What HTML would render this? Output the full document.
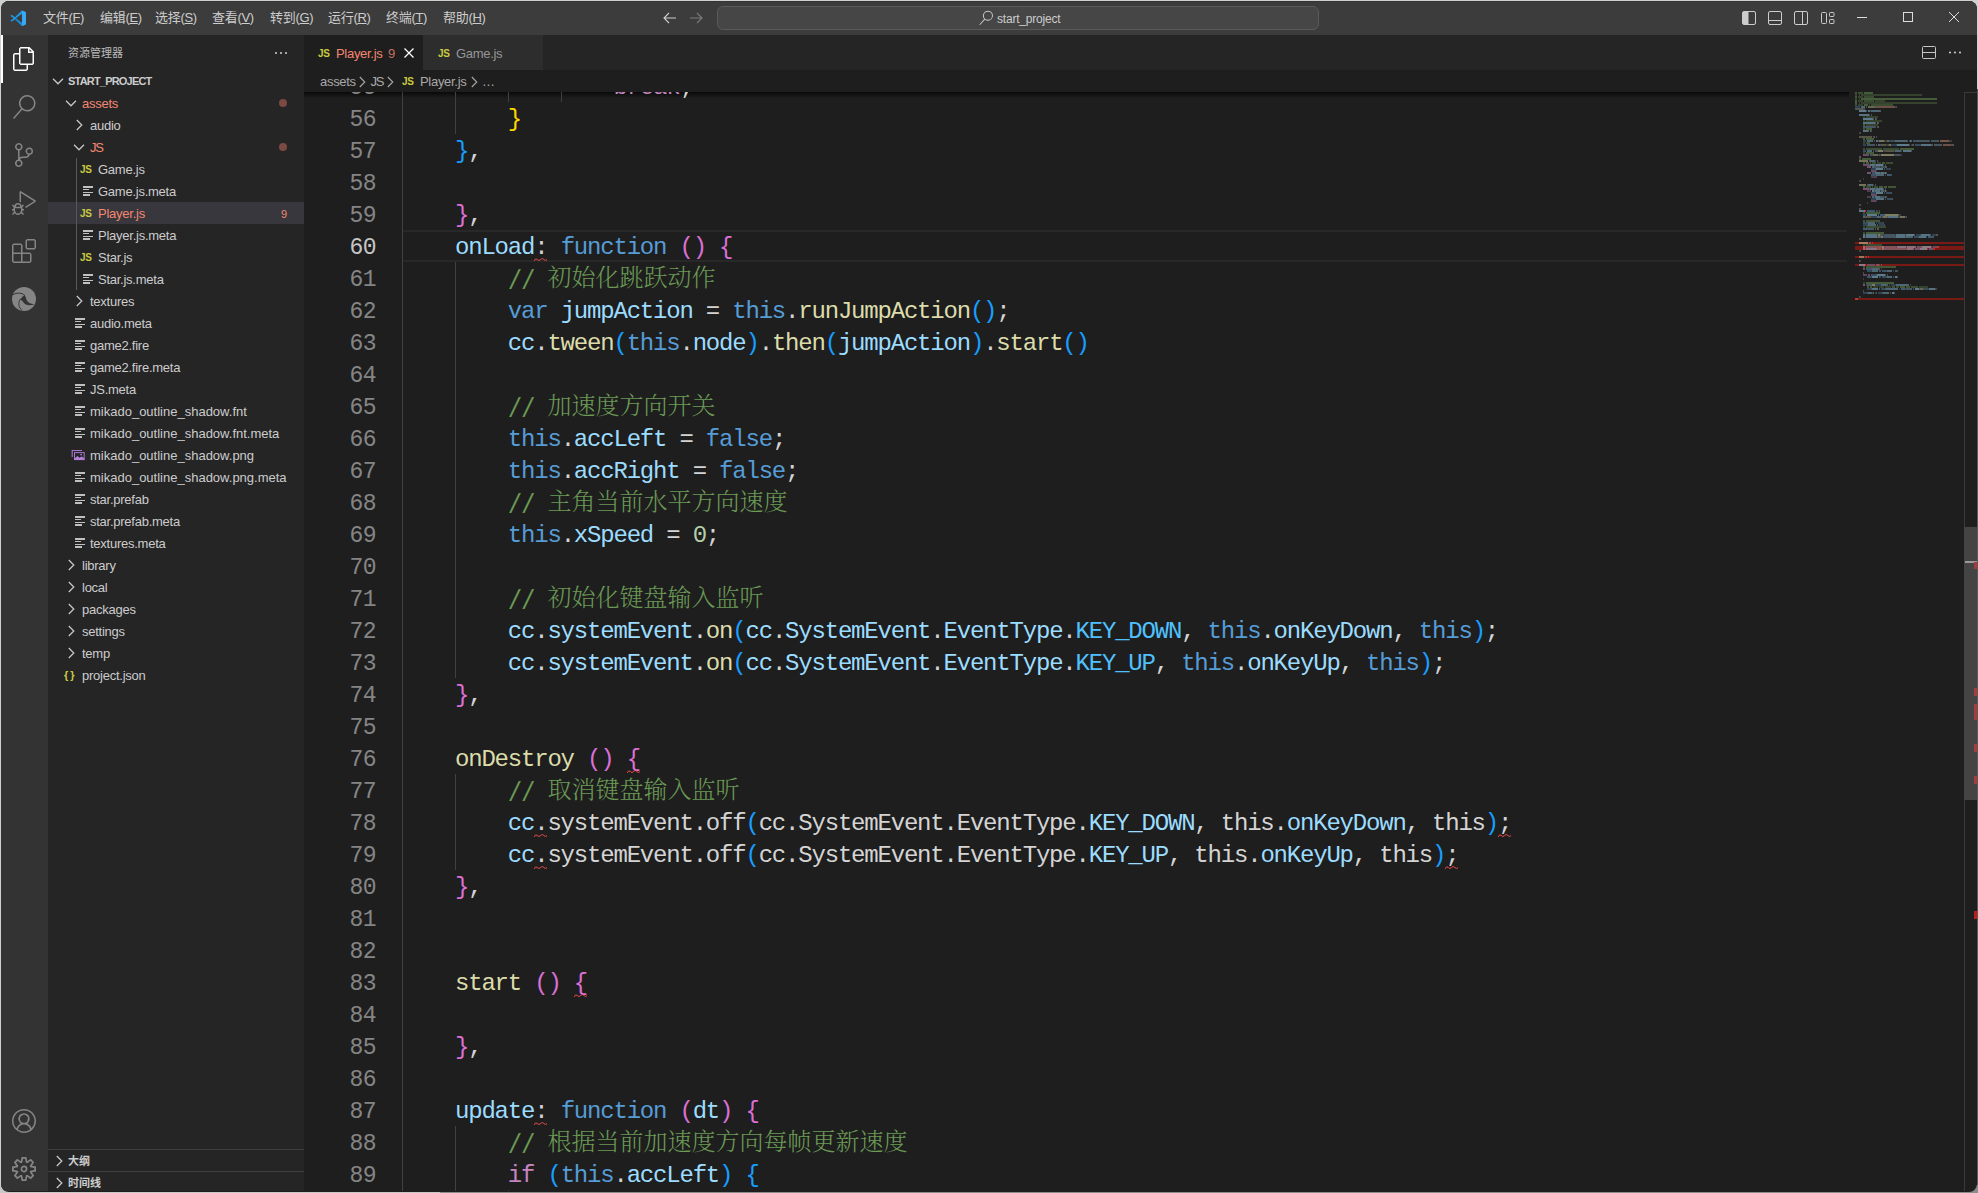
<!DOCTYPE html>
<html lang="zh-CN">
<head>
<meta charset="utf-8">
<title>Player.js - start_project - Visual Studio Code</title>
<style>
*{box-sizing:border-box;margin:0;padding:0}
html,body{width:1978px;height:1193px;overflow:hidden;background:#d0d0d0}
body{position:relative;font-family:"Liberation Sans","Noto Sans CJK SC",sans-serif;font-size:13px;color:#ccc}
.win{position:absolute;left:1px;top:1px;width:1976px;height:1190.700px;border-radius:8px;overflow:hidden;background:#1e1e1e}
.abs{position:absolute}
/* title bar */
.title{position:absolute;left:0;top:0;width:1976px;height:34px;background:#3c3c3c}
.menu{position:absolute;top:0;height:34px;line-height:34px;font-size:13px;color:#ccc;white-space:nowrap;letter-spacing:-.3px}
.cmd{position:absolute;left:716px;top:5px;width:602px;height:24px;border:1px solid #5a5a5a;border-radius:6px;background:#464646}
.cmd span{position:absolute;left:279px;top:1px;line-height:22px;letter-spacing:-.2px;font-size:12px;color:#ccc}
/* activity bar */
.act{position:absolute;left:0;top:34px;width:47px;height:1156px;background:#333}
.act svg{position:absolute;fill:#858585}
.act .ind{position:absolute;left:0;top:0;width:2px;height:48px;background:#fff}
/* sidebar */
.side{position:absolute;left:47px;top:34px;width:256px;height:1156px;background:#252526}
.side .hdr{position:absolute;left:20px;top:0;height:35px;line-height:36px;font-size:11px;color:#bbb}
.row{position:absolute;left:0;width:256px;height:22px;line-height:22px;font-size:13px;color:#ccc;white-space:nowrap}
.row .t{position:absolute;top:1px;letter-spacing:-.25px}
.row.sel{background:#37373d}
.red{color:#f48771}
.chev{position:absolute;top:3px;width:16px;height:16px;fill:none;stroke:#c8c8c8;stroke-width:1.250}
.fi{position:absolute;top:1px;font-weight:bold;font-size:10px;color:#cbcb41;letter-spacing:-.3px}
.lines{position:absolute;top:6px;width:11px;height:10px}
.lines i{position:absolute;left:0;height:1.500px;background:#c0c0c0}
.sect{position:absolute;left:0;width:256px;height:22px;border-top:1px solid #3f3f40;font-size:11px;font-weight:bold;color:#ccc;line-height:21px}
/* editor */
.tabs{position:absolute;left:303px;top:34px;width:1673px;height:35px;background:#252526}
.tab{position:absolute;top:0;height:35px;line-height:37px;font-size:13px;white-space:nowrap;letter-spacing:-.3px}
.bc{position:absolute;left:303px;top:69px;width:1673px;height:22px;background:#1e1e1e;line-height:24px;font-size:13px;color:#a9a9a9;white-space:nowrap;z-index:5;letter-spacing:-.3px}
.bcsh{position:absolute;left:0;top:22px;width:1545px;height:6px;background:linear-gradient(#000b,#0000)}
.code{position:absolute;left:303px;top:69px;width:1673px;height:1121px;overflow:hidden;font-family:"Liberation Mono","Noto Serif CJK SC",monospace;font-size:24px;letter-spacing:-1.200px}
.ln{position:absolute;left:0;width:72px;text-align:right;height:32px;line-height:32px;color:#858585;white-space:pre;font-size:23px;letter-spacing:-.6px}
.ln.cur{color:#c6c6c6}
.cl{position:absolute;left:98.2px;height:32px;line-height:32px;white-space:pre;color:#d4d4d4}
.cj{font-family:"Noto Serif CJK SC",serif;font-weight:300;font-size:24px;letter-spacing:0;line-height:32px;position:relative;top:-4px}
.sl{display:inline-block;transform:translateY(-1.600px) scaleY(1.180);transform-origin:50% 50%}
.g{position:absolute;width:1px;background:#404040}
.k{color:#569cd6}.v{color:#9cdcfe}.f{color:#dcdcaa}.c{color:#6a9955}.p{color:#c586c0}.n{color:#b5cea8}.K{color:#4fc1ff}
.b1{color:#ffd700}.b2{color:#da70d6}.b3{color:#179fff}
.sq{background:no-repeat left bottom;}
</style>
</head>
<body>
<div class="abs" style="left:1970px;top:89px;width:8px;height:1104px;background:#5a5a5a"></div>
<div class="abs" style="left:0;top:1185px;width:440px;height:8px;background:#c8c8c8"></div>
<div class="abs" style="left:440px;top:1185px;width:1538px;height:8px;background:#8c8c8c"></div>
<div class="win">
<!-- TITLE BAR -->
<div class="title">
  <div class="abs topborder" style="left:0;top:0;width:1976px;height:1px;background:#333"></div>
  <svg class="abs" style="left:8.500px;top:8.800px" width="16.500" height="16.500" viewBox="0 0 100 100">
    <path d="M71 3 29 44 11 30 3 34v32l8 4 18-14 42 41 26-11V14z" fill="#2489ca" opacity="0"/>
    <path d="M3.5 66.5 10.8 70 30 55 71 96.500V75L3.5 33.5z" fill="#1f8ad2" opacity="0"/>
    <path d="M96.5 14v72L71 97.500V2.500z" fill="#35a9f5"/>
    <path d="M71 2.500 29.500 44 11 30 3 34.500 71 75z" fill="#1f8fd8" opacity="0"/>
    <path d="M3 34.500 11 30l63 49-3 18.500L30 56 11 70l-8-4.500 20-15.500z" fill="#1a8ad4"/>
    <path d="M3 65.500 11 70l63-49-3-18.500L30 44 11 30l-8 4.500 20 15.500z" fill="#2196e0"/>
    <path d="M74 25v50L44 50z" fill="#3c3c3c"/>
    <path d="M96.500 14 74 2.500V97.500L96.500 86z" fill="#3aa8f4"/>
  </svg>
  <span class="menu" style="left:42px">文件(<u>F</u>)</span>
  <span class="menu" style="left:99px">编辑(<u>E</u>)</span>
  <span class="menu" style="left:154px">选择(<u>S</u>)</span>
  <span class="menu" style="left:211px">查看(<u>V</u>)</span>
  <span class="menu" style="left:269px">转到(<u>G</u>)</span>
  <span class="menu" style="left:327px">运行(<u>R</u>)</span>
  <span class="menu" style="left:385px">终端(<u>T</u>)</span>
  <span class="menu" style="left:442px">帮助(<u>H</u>)</span>
  <!-- nav arrows -->
  <svg class="abs" style="left:661px;top:9px" width="16" height="16" viewBox="0 0 16 16" fill="none" stroke="#ccc" stroke-width="1.1"><path d="M14 8H2.500M7 3 2 8l5 5"/></svg>
  <svg class="abs" style="left:687px;top:9px" width="16" height="16" viewBox="0 0 16 16" fill="none" stroke="#7a7a7a" stroke-width="1.1"><path d="M2 8h11.500M9 3l5 5-5 5"/></svg>
  <div class="cmd">
    <svg class="abs" style="left:260px;top:3px" width="16" height="16" viewBox="0 0 24 24" fill="#ccc"><path d="M15.250 0a8.250 8.250 0 0 0-6.180 13.720L1 22.880l1.120 1 8.050-9.120A8.251 8.251 0 1 0 15.250.010V0zm0 15a6.750 6.750 0 1 1 0-13.500 6.750 6.750 0 0 1 0 13.500z" transform="scale(.9) translate(1.300 1.300)"/></svg>
    <span>start_project</span>
  </div>
  <!-- layout controls -->
  <svg class="abs" style="left:1740px;top:9px" width="16" height="16" viewBox="0 0 16 16" fill="none" stroke="#ccc" stroke-width="1"><rect x="1.500" y="1.500" width="13" height="13" rx="1.500"/><path d="M2 2h5.500v12H2z" fill="#ccc" stroke="none"/></svg>
  <svg class="abs" style="left:1766px;top:9px" width="16" height="16" viewBox="0 0 16 16" fill="none" stroke="#ccc" stroke-width="1"><rect x="1.500" y="1.500" width="13" height="13" rx="1.500"/><path d="M1.500 10.500h13"/></svg>
  <svg class="abs" style="left:1792px;top:9px" width="16" height="16" viewBox="0 0 16 16" fill="none" stroke="#ccc" stroke-width="1"><rect x="1.500" y="1.500" width="13" height="13" rx="1.500"/><path d="M9.500 1.500v13"/></svg>
  <svg class="abs" style="left:1818px;top:9px" width="16" height="16" viewBox="0 0 16 16" fill="none" stroke="#ccc" stroke-width="1"><rect x="2.500" y="2.500" width="5" height="11" rx="1"/><rect x="10.500" y="2.500" width="4.500" height="4" rx=".8"/><rect x="10.500" y="9.500" width="4.500" height="4" rx=".8"/></svg>
  <!-- window controls -->
  <svg class="abs" style="left:1856px;top:12px" width="10" height="10" viewBox="0 0 10 10" stroke="#ddd" stroke-width="1"><path d="M0 4.500h10"/></svg>
  <svg class="abs" style="left:1902px;top:11px" width="10" height="10" viewBox="0 0 10 10" fill="none" stroke="#ddd" stroke-width="1"><rect x=".5" y=".5" width="9" height="9"/></svg>
  <svg class="abs" style="left:1948px;top:11px" width="10" height="10" viewBox="0 0 10 10" stroke="#ddd" stroke-width="1"><path d="M0 0l10 10M10 0 0 10"/></svg>
</div>
<!-- ACTIVITY BAR -->
<div class="act">
  <div class="ind"></div>
  <svg style="left:11px;top:12px;fill:#fff" width="24" height="24" viewBox="0 0 24 24"><path d="M17.500 0h-9L7 1.500V6H2.500L1 7.500v15.070L2.500 24h12.070L16 22.570V18h4.700l1.300-1.430V4.500L17.500 0zm0 2.120 2.380 2.380H17.500V2.120zm-3 20.380h-12v-15H7v9.070L8.500 18h6v4.500zm6-6h-12v-15H16V6h4.500v10.500z"/></svg>
  <svg style="left:11px;top:60px" width="24" height="24" viewBox="0 0 24 24"><path d="M15.250 0a8.250 8.250 0 0 0-6.180 13.720L1 22.880l1.120 1 8.050-9.120A8.251 8.251 0 1 0 15.250.010V0zm0 15a6.750 6.750 0 1 1 0-13.500 6.750 6.750 0 0 1 0 13.500z"/></svg>
  <svg style="left:11px;top:108px" width="24" height="24" viewBox="0 0 24 24"><path d="M21.007 8.222A3.738 3.738 0 0 0 15.045 5.200a3.737 3.737 0 0 0 1.156 6.583 2.988 2.988 0 0 1-2.668 1.670h-2.990a4.456 4.456 0 0 0-2.989 1.165V7.400a3.737 3.737 0 1 0-1.494 0v9.117a3.776 3.776 0 1 0 1.816.099 2.990 2.990 0 0 1 2.668-1.667h2.990a4.484 4.484 0 0 0 4.223-3.039 3.736 3.736 0 0 0 3.250-3.687zM4.565 3.738a2.242 2.242 0 1 1 4.484 0 2.242 2.242 0 0 1-4.484 0zm4.484 16.441a2.242 2.242 0 1 1-4.484 0 2.242 2.242 0 0 1 4.484 0zm8.221-9.715a2.242 2.242 0 1 1 0-4.485 2.242 2.242 0 0 1 0 4.485z"/></svg>
  <svg style="left:11px;top:156px" width="24" height="24" viewBox="0 0 24 24"><path d="M10.940 13.500l-1.320 1.320a3.730 3.730 0 0 0-7.240 0L1.060 13.500 0 14.560l1.720 1.720-.22.220V18H0v1.500h1.500v.080c.077.489.214.966.410 1.420L0 22.940 1.060 24l1.650-1.650A4.308 4.308 0 0 0 6 24a4.310 4.310 0 0 0 3.290-1.650L10.940 24 12 22.940 10.090 21c.198-.464.336-.951.410-1.450v-.100H12V18h-1.500v-1.500l-.22-.220L12 14.560l-1.060-1.060zM6 13.500a2.250 2.250 0 0 1 2.250 2.250h-4.500A2.250 2.250 0 0 1 6 13.500zm3 6a3.330 3.330 0 0 1-3 3 3.330 3.330 0 0 1-3-3v-2.250h6v2.250zm14.760-9.900v1.260L13.500 17.370V15.600l8.500-5.370L9 2v9.460a5.070 5.070 0 0 0-1.500-.720V.630L8.640 0l15.120 9.600z"/></svg>
  <svg style="left:11px;top:204px" width="24" height="24" viewBox="0 0 24 24"><path d="M13.500 1.500 15 0h7.500L24 1.500V9l-1.500 1.500H15L13.500 9V1.500zm1.500 0V9h7.500V1.500H15zM0 15V6l1.500-1.500H9L10.500 6v7.500H18l1.500 1.500v7.500L18 24H1.500L0 22.500V15zm9-1.500V6H1.500v7.500H9zM9 15H1.500v7.500H9V15zm1.500 7.500H18V15h-7.500v7.500z"/></svg>
  <!-- edge -->
  <svg style="left:11px;top:252px" width="24" height="24" viewBox="0 0 24 24"><circle cx="12" cy="12" r="12"/><g fill="none" stroke="#333" stroke-linecap="round"><path d="M1.200 7.400C5 5.600 10 5.400 12.800 8.400" stroke-width="1"/><path d="M8.200 12.300C5.800 16 6.500 20.500 9.800 23.300" stroke-width=".9"/></g><path d="M12.500 8.200C10.500 9.500 8.800 11 7.900 13.200 9.300 12.300 10.200 13.400 11.500 15.600 13 18 17 19.200 22.400 17.500 18.500 17 15.500 15.600 14.400 12.600 13.900 11 13.700 9.500 12.500 8.200z" fill="#333"/></svg>
  <svg style="left:11px;top:1074px" width="24" height="24" viewBox="0 0 16 16"><path d="M16 7.992C16 3.580 12.416 0 8 0S0 3.580 0 7.992c0 2.430 1.104 4.620 2.832 6.090.16.016.32.016.32.032.144.112.288.224.448.336.80.048.144.111.224.175A7.980 7.980 0 0 0 8.016 16a7.980 7.980 0 0 0 4.480-1.375c.080-.48.144-.111.224-.160.144-.111.304-.223.448-.335.016-.16.032-.16.032-.032 1.696-1.487 2.800-3.676 2.800-6.106zm-8 7.001c-1.504 0-2.880-.480-4.016-1.279.016-.128.048-.255.080-.383a4.170 4.170 0 0 1 .416-.991c.176-.304.384-.576.640-.816.240-.240.528-.463.816-.639.304-.176.624-.304.976-.400A4.150 4.150 0 0 1 8 10.342a4.185 4.185 0 0 1 2.928 1.166c.368.368.656.800.864 1.295.112.288.192.592.240.911A7.030 7.030 0 0 1 8 14.993zm-2.448-7.400a2.490 2.490 0 0 1-.208-1.024c0-.351.064-.703.208-1.023.144-.320.336-.607.576-.847.240-.240.528-.431.848-.575.320-.144.672-.208 1.024-.208.368 0 .704.064 1.024.208.320.144.608.336.848.575.240.240.432.528.576.847.144.320.208.672.208 1.023 0 .368-.64.704-.208 1.023a2.840 2.840 0 0 1-.576.848 2.840 2.840 0 0 1-.848.575 2.715 2.715 0 0 1-2.064 0 2.840 2.840 0 0 1-.848-.575 2.526 2.526 0 0 1-.560-.848zm7.424 5.306c0-.032-.016-.048-.016-.080a5.220 5.220 0 0 0-.688-1.406 4.883 4.883 0 0 0-1.088-1.135 5.207 5.207 0 0 0-1.040-.608 2.820 2.820 0 0 0 .464-.383 4.200 4.200 0 0 0 .624-.784 3.624 3.624 0 0 0 .528-1.934 3.710 3.710 0 0 0-.288-1.470 3.799 3.799 0 0 0-.816-1.199 3.845 3.845 0 0 0-1.200-.800 3.720 3.720 0 0 0-1.472-.287 3.720 3.720 0 0 0-1.472.288 3.631 3.631 0 0 0-1.200.815 3.840 3.840 0 0 0-.800 1.199 3.710 3.710 0 0 0-.288 1.470c0 .352.048.688.144 1.007.96.336.224.640.400.927.160.288.384.544.624.784.144.144.304.271.480.383a5.120 5.120 0 0 0-1.040.624c-.416.320-.784.703-1.088 1.119a4.999 4.999 0 0 0-.688 1.406c-.16.032-.16.064-.16.080C1.776 11.636.992 9.910.992 7.992.992 4.140 4.144.991 8 .991s7.008 3.149 7.008 7.001a6.960 6.960 0 0 1-2.032 4.907z"/></svg>
  <svg style="left:11px;top:1122px" width="24" height="24" viewBox="0 0 24 24"><path d="M19.850 8.750l4.150.830v4.840l-4.150.830 2.350 3.520-3.430 3.430-3.520-2.350-.830 4.150H9.580l-.830-4.150-3.520 2.350-3.430-3.430 2.350-3.520L0 14.420V9.580l4.150-.830L1.800 5.230 5.230 1.800l3.520 2.350L9.580 0h4.840l.830 4.150 3.520-2.350 3.430 3.430-2.350 3.520zm-1.570 5.070 4-.810v-2l-4-.810-.540-1.300 2.290-3.430-1.430-1.430-3.430 2.290-1.300-.540-.810-4h-2l-.810 4-1.300.540-3.430-2.290-1.430 1.430L6.380 8.900l-.540 1.300-4 .810v2l4 .810.540 1.300-2.290 3.430 1.430 1.430 3.430-2.290 1.300.540.810 4h2l.810-4 1.300-.540 3.430 2.290 1.430-1.430-2.290-3.430.540-1.300zm-8.186-4.672A3.430 3.430 0 0 1 12 8.570 3.440 3.440 0 0 1 15.430 12a3.430 3.430 0 1 1-5.336-2.852zm.956 4.274c.281.188.612.288.950.288A1.700 1.700 0 0 0 13.710 12a1.710 1.710 0 1 0-2.660 1.422z"/></svg>
</div>
<!-- SIDEBAR -->
<div class="side">
<div class="hdr">资源管理器</div>
<svg class="abs" style="left:225px;top:10px" width="16" height="16" viewBox="0 0 16 16" fill="#c5c5c5"><circle cx="3" cy="8" r="1.1"/><circle cx="8" cy="8" r="1.1"/><circle cx="13" cy="8" r="1.1"/></svg>
<div class="row" style="top:35px;font-size:11px;font-weight:bold"><svg class="chev" style="left:2px" viewBox="0 0 16 16"><path d="M3 5.800 8 10.800 13 5.800"/></svg><span class="t" style="left:20px;top:0;letter-spacing:-.8px">START_PROJECT</span></div>
<div class="row" style="top:57px"><svg class="chev" style="left:15px" viewBox="0 0 16 16"><path d="M3 5.800 8 10.800 13 5.800"/></svg><span class="t red" style="left:34px">assets</span><span class="abs" style="left:231px;top:7px;width:8px;height:8px;border-radius:50%;background:#7c4a43"></span></div>
<div class="row" style="top:79px"><svg class="chev" style="left:23px" viewBox="0 0 16 16"><path d="M5.800 3 10.800 8 5.800 13"/></svg><span class="t" style="left:42px">audio</span></div>
<div class="row" style="top:101px"><svg class="chev" style="left:23px" viewBox="0 0 16 16"><path d="M3 5.800 8 10.800 13 5.800"/></svg><span class="t red" style="left:42px;letter-spacing:-1.300px">JS</span><span class="abs" style="left:231px;top:7px;width:8px;height:8px;border-radius:50%;background:#7c4a43"></span></div>
<div class="row" style="top:123px"><span class="fi" style="left:32px">JS</span><span class="t" style="left:50px">Game.js</span></div>
<div class="row" style="top:145px"><span class="lines" style="left:35px"><i style="top:0;width:9.500px"></i><i style="top:2.800px;width:6px"></i><i style="top:5.600px;width:9.500px"></i><i style="top:8.400px;width:6.500px"></i></span><span class="t" style="left:50px">Game.js.meta</span></div>
<div class="row sel" style="top:167px"><span class="fi" style="left:32px">JS</span><span class="t red" style="left:50px">Player.js</span><span class="abs" style="left:233px;top:1px;font-size:11px;color:#f48771">9</span></div>
<div class="row" style="top:189px"><span class="lines" style="left:35px"><i style="top:0;width:9.500px"></i><i style="top:2.800px;width:6px"></i><i style="top:5.600px;width:9.500px"></i><i style="top:8.400px;width:6.500px"></i></span><span class="t" style="left:50px">Player.js.meta</span></div>
<div class="row" style="top:211px"><span class="fi" style="left:32px">JS</span><span class="t" style="left:50px">Star.js</span></div>
<div class="row" style="top:233px"><span class="lines" style="left:35px"><i style="top:0;width:9.500px"></i><i style="top:2.800px;width:6px"></i><i style="top:5.600px;width:9.500px"></i><i style="top:8.400px;width:6.500px"></i></span><span class="t" style="left:50px">Star.js.meta</span></div>
<div class="row" style="top:255px"><svg class="chev" style="left:23px" viewBox="0 0 16 16"><path d="M5.800 3 10.800 8 5.800 13"/></svg><span class="t" style="left:42px">textures</span></div>
<div class="row" style="top:277px"><span class="lines" style="left:27px"><i style="top:0;width:9.500px"></i><i style="top:2.800px;width:6px"></i><i style="top:5.600px;width:9.500px"></i><i style="top:8.400px;width:6.500px"></i></span><span class="t" style="left:42px">audio.meta</span></div>
<div class="row" style="top:299px"><span class="lines" style="left:27px"><i style="top:0;width:9.500px"></i><i style="top:2.800px;width:6px"></i><i style="top:5.600px;width:9.500px"></i><i style="top:8.400px;width:6.500px"></i></span><span class="t" style="left:42px">game2.fire</span></div>
<div class="row" style="top:321px"><span class="lines" style="left:27px"><i style="top:0;width:9.500px"></i><i style="top:2.800px;width:6px"></i><i style="top:5.600px;width:9.500px"></i><i style="top:8.400px;width:6.500px"></i></span><span class="t" style="left:42px">game2.fire.meta</span></div>
<div class="row" style="top:343px"><span class="lines" style="left:27px"><i style="top:0;width:9.500px"></i><i style="top:2.800px;width:6px"></i><i style="top:5.600px;width:9.500px"></i><i style="top:8.400px;width:6.500px"></i></span><span class="t" style="left:42px">JS.meta</span></div>
<div class="row" style="top:365px"><span class="lines" style="left:27px"><i style="top:0;width:9.500px"></i><i style="top:2.800px;width:6px"></i><i style="top:5.600px;width:9.500px"></i><i style="top:8.400px;width:6.500px"></i></span><span class="t" style="left:42px;letter-spacing:0">mikado_outline_shadow.fnt</span></div>
<div class="row" style="top:387px"><span class="lines" style="left:27px"><i style="top:0;width:9.500px"></i><i style="top:2.800px;width:6px"></i><i style="top:5.600px;width:9.500px"></i><i style="top:8.400px;width:6.500px"></i></span><span class="t" style="left:42px;letter-spacing:0">mikado_outline_shadow.fnt.meta</span></div>
<div class="row" style="top:409px"><svg class="abs" style="left:23px;top:5px" width="15" height="13" viewBox="0 0 15 13"><path d="M1.200 8V1.500H11" fill="none" stroke="#a877cf" stroke-width="1.100"/><rect x="3.500" y="3.600" width="9.700" height="7" fill="#252526" stroke="#a877cf" stroke-width="1"/><path d="M3.500 10.800V9.500L6.400 6.900 8.400 8.800 10.500 7.400 13.200 9.300v1.500z" fill="#b582dc"/><circle cx="10.100" cy="5.600" r=".9" fill="#b582dc"/></svg><span class="t" style="left:42px;letter-spacing:0">mikado_outline_shadow.png</span></div>
<div class="row" style="top:431px"><span class="lines" style="left:27px"><i style="top:0;width:9.500px"></i><i style="top:2.800px;width:6px"></i><i style="top:5.600px;width:9.500px"></i><i style="top:8.400px;width:6.500px"></i></span><span class="t" style="left:42px;letter-spacing:0">mikado_outline_shadow.png.meta</span></div>
<div class="row" style="top:453px"><span class="lines" style="left:27px"><i style="top:0;width:9.500px"></i><i style="top:2.800px;width:6px"></i><i style="top:5.600px;width:9.500px"></i><i style="top:8.400px;width:6.500px"></i></span><span class="t" style="left:42px">star.prefab</span></div>
<div class="row" style="top:475px"><span class="lines" style="left:27px"><i style="top:0;width:9.500px"></i><i style="top:2.800px;width:6px"></i><i style="top:5.600px;width:9.500px"></i><i style="top:8.400px;width:6.500px"></i></span><span class="t" style="left:42px">star.prefab.meta</span></div>
<div class="row" style="top:497px"><span class="lines" style="left:27px"><i style="top:0;width:9.500px"></i><i style="top:2.800px;width:6px"></i><i style="top:5.600px;width:9.500px"></i><i style="top:8.400px;width:6.500px"></i></span><span class="t" style="left:42px">textures.meta</span></div>
<div class="row" style="top:519px"><svg class="chev" style="left:15px" viewBox="0 0 16 16"><path d="M5.800 3 10.800 8 5.800 13"/></svg><span class="t" style="left:34px">library</span></div>
<div class="row" style="top:541px"><svg class="chev" style="left:15px" viewBox="0 0 16 16"><path d="M5.800 3 10.800 8 5.800 13"/></svg><span class="t" style="left:34px">local</span></div>
<div class="row" style="top:563px"><svg class="chev" style="left:15px" viewBox="0 0 16 16"><path d="M5.800 3 10.800 8 5.800 13"/></svg><span class="t" style="left:34px">packages</span></div>
<div class="row" style="top:585px"><svg class="chev" style="left:15px" viewBox="0 0 16 16"><path d="M5.800 3 10.800 8 5.800 13"/></svg><span class="t" style="left:34px">settings</span></div>
<div class="row" style="top:607px"><svg class="chev" style="left:15px" viewBox="0 0 16 16"><path d="M5.800 3 10.800 8 5.800 13"/></svg><span class="t" style="left:34px">temp</span></div>
<div class="row" style="top:629px"><span class="abs" style="left:16px;top:0;font-weight:bold;font-size:11px;color:#cbcb41;letter-spacing:2px">{}</span><span class="t" style="left:34px">project.json</span></div>
<div class="abs" style="left:28px;top:123px;width:1px;height:132px;background:#585858"></div>
<div class="sect" style="top:1114px"><svg class="chev" style="left:3px" viewBox="0 0 16 16"><path d="M5.800 3 10.800 8 5.800 13"/></svg><span class="abs" style="left:20px;top:1px">大纲</span></div>
<div class="sect" style="top:1136px"><svg class="chev" style="left:3px" viewBox="0 0 16 16"><path d="M5.800 3 10.800 8 5.800 13"/></svg><span class="abs" style="left:20px;top:1px">时间线</span></div>
</div>
<!-- EDITOR -->
<div class="code">
<div class="bcsh"></div>
<div class="abs" style="left:99px;top:160px;width:1444px;height:32px;border-top:2px solid #282828;border-bottom:2px solid #282828"></div>
<div class="g" style="left:98px;top:0px;height:1152px"></div>
<div class="g" style="left:151px;top:0px;height:64px"></div>
<div class="g" style="left:151px;top:192px;height:416px"></div>
<div class="g" style="left:151px;top:704px;height:96px"></div>
<div class="g" style="left:151px;top:1056px;height:96px"></div>
<div class="g" style="left:204px;top:0px;height:32px"></div>
<div class="g" style="left:257px;top:0px;height:32px"></div>
<div class="g" style="left:204px;top:1120px;height:32px"></div>
<div class="ln" style="top:2px">55</div>
<div class="cl" style="top:2px">                <span class="p">break</span>;</div>
<div class="ln" style="top:34px">56</div>
<div class="cl" style="top:34px">        <span class="b1">}</span></div>
<div class="ln" style="top:66px">57</div>
<div class="cl" style="top:66px">    <span class="b3">}</span>,</div>
<div class="ln" style="top:98px">58</div>
<div class="ln" style="top:130px">59</div>
<div class="cl" style="top:130px">    <span class="b2">}</span>,</div>
<div class="ln cur" style="top:162px">60</div>
<div class="cl" style="top:162px">    <span class="v">onLoad</span>: <span class="k">function</span> <span class="b2">()</span> <span class="b2">{</span></div>
<div class="ln" style="top:194px">61</div>
<div class="cl" style="top:194px">        <span class="c"><span class="sl">//</span> <span class="cj">初始化跳跃动作</span></span></div>
<div class="ln" style="top:226px">62</div>
<div class="cl" style="top:226px">        <span class="k">var</span> <span class="v">jumpAction</span> = <span class="k">this</span>.<span class="f">runJumpAction</span><span class="b3">()</span>;</div>
<div class="ln" style="top:258px">63</div>
<div class="cl" style="top:258px">        <span class="v">cc</span>.<span class="f">tween</span><span class="b3">(</span><span class="k">this</span>.<span class="v">node</span><span class="b3">)</span>.<span class="f">then</span><span class="b3">(</span><span class="v">jumpAction</span><span class="b3">)</span>.<span class="f">start</span><span class="b3">()</span></div>
<div class="ln" style="top:290px">64</div>
<div class="ln" style="top:322px">65</div>
<div class="cl" style="top:322px">        <span class="c"><span class="sl">//</span> <span class="cj">加速度方向开关</span></span></div>
<div class="ln" style="top:354px">66</div>
<div class="cl" style="top:354px">        <span class="k">this</span>.<span class="v">accLeft</span> = <span class="k">false</span>;</div>
<div class="ln" style="top:386px">67</div>
<div class="cl" style="top:386px">        <span class="k">this</span>.<span class="v">accRight</span> = <span class="k">false</span>;</div>
<div class="ln" style="top:418px">68</div>
<div class="cl" style="top:418px">        <span class="c"><span class="sl">//</span> <span class="cj">主角当前水平方向速度</span></span></div>
<div class="ln" style="top:450px">69</div>
<div class="cl" style="top:450px">        <span class="k">this</span>.<span class="v">xSpeed</span> = <span class="n">0</span>;</div>
<div class="ln" style="top:482px">70</div>
<div class="ln" style="top:514px">71</div>
<div class="cl" style="top:514px">        <span class="c"><span class="sl">//</span> <span class="cj">初始化键盘输入监听</span></span></div>
<div class="ln" style="top:546px">72</div>
<div class="cl" style="top:546px">        <span class="v">cc</span>.<span class="v">systemEvent</span>.<span class="f">on</span><span class="b3">(</span><span class="v">cc</span>.<span class="v">SystemEvent</span>.<span class="v">EventType</span>.<span class="K">KEY_DOWN</span>, <span class="k">this</span>.<span class="v">onKeyDown</span>, <span class="k">this</span><span class="b3">)</span>;</div>
<div class="ln" style="top:578px">73</div>
<div class="cl" style="top:578px">        <span class="v">cc</span>.<span class="v">systemEvent</span>.<span class="f">on</span><span class="b3">(</span><span class="v">cc</span>.<span class="v">SystemEvent</span>.<span class="v">EventType</span>.<span class="K">KEY_UP</span>, <span class="k">this</span>.<span class="v">onKeyUp</span>, <span class="k">this</span><span class="b3">)</span>;</div>
<div class="ln" style="top:610px">74</div>
<div class="cl" style="top:610px">    <span class="b2">}</span>,</div>
<div class="ln" style="top:642px">75</div>
<div class="ln" style="top:674px">76</div>
<div class="cl" style="top:674px">    <span class="f">onDestroy</span> <span class="b2">()</span> <span class="b2">{</span></div>
<div class="ln" style="top:706px">77</div>
<div class="cl" style="top:706px">        <span class="c"><span class="sl">//</span> <span class="cj">取消键盘输入监听</span></span></div>
<div class="ln" style="top:738px">78</div>
<div class="cl" style="top:738px">        <span class="v">cc</span>.systemEvent.off<span class="b3">(</span>cc.SystemEvent.EventType.<span class="v">KEY_DOWN</span>, this.<span class="v">onKeyDown</span>, this<span class="b3">)</span>;</div>
<div class="ln" style="top:770px">79</div>
<div class="cl" style="top:770px">        <span class="v">cc</span>.systemEvent.off<span class="b3">(</span>cc.SystemEvent.EventType.<span class="v">KEY_UP</span>, this.<span class="v">onKeyUp</span>, this<span class="b3">)</span>;</div>
<div class="ln" style="top:802px">80</div>
<div class="cl" style="top:802px">    <span class="b2">}</span>,</div>
<div class="ln" style="top:834px">81</div>
<div class="ln" style="top:866px">82</div>
<div class="ln" style="top:898px">83</div>
<div class="cl" style="top:898px">    <span class="f">start</span> <span class="b2">()</span> <span class="b2">{</span></div>
<div class="ln" style="top:930px">84</div>
<div class="ln" style="top:962px">85</div>
<div class="cl" style="top:962px">    <span class="b2">}</span>,</div>
<div class="ln" style="top:994px">86</div>
<div class="ln" style="top:1026px">87</div>
<div class="cl" style="top:1026px">    <span class="v">update</span>: <span class="k">function</span> <span class="b2">(</span><span class="v">dt</span><span class="b2">)</span> <span class="b2">{</span></div>
<div class="ln" style="top:1058px">88</div>
<div class="cl" style="top:1058px">        <span class="c"><span class="sl">//</span> <span class="cj">根据当前加速度方向每帧更新速度</span></span></div>
<div class="ln" style="top:1090px">89</div>
<div class="cl" style="top:1090px">        <span class="p">if</span> <span class="b3">(</span><span class="k">this</span>.<span class="v">accLeft</span><span class="b3">)</span> <span class="b3">{</span></div>
<div class="ln" style="top:1122px">90</div>
<div class="cl" style="top:1122px">            <span class="k">this</span>.<span class="v">xSpeed</span> -= <span class="k">this</span>.<span class="v">accel</span> * <span class="v">dt</span>;</div>
<svg class="abs" style="left:230.2px;top:188px" width="13.200" height="4" viewBox="0 0 13.200 4" fill="none" stroke="#f14c4c" stroke-width="1"><path d="M0 3q1.650-3.600 3.300-1.500t3.300 0 3.300 0 3.300 0"/></svg>
<svg class="abs" style="left:322.6px;top:700px" width="13.200" height="4" viewBox="0 0 13.200 4" fill="none" stroke="#f14c4c" stroke-width="1"><path d="M0 3q1.650-3.600 3.300-1.500t3.300 0 3.300 0 3.300 0"/></svg>
<svg class="abs" style="left:230.2px;top:764px" width="13.200" height="4" viewBox="0 0 13.200 4" fill="none" stroke="#f14c4c" stroke-width="1"><path d="M0 3q1.650-3.600 3.300-1.500t3.300 0 3.300 0 3.300 0"/></svg>
<svg class="abs" style="left:1193.8px;top:764px" width="13.200" height="4" viewBox="0 0 13.200 4" fill="none" stroke="#f14c4c" stroke-width="1"><path d="M0 3q1.650-3.600 3.300-1.500t3.300 0 3.300 0 3.300 0"/></svg>
<svg class="abs" style="left:230.2px;top:796px" width="13.200" height="4" viewBox="0 0 13.200 4" fill="none" stroke="#f14c4c" stroke-width="1"><path d="M0 3q1.650-3.600 3.300-1.500t3.300 0 3.300 0 3.300 0"/></svg>
<svg class="abs" style="left:1141.0px;top:796px" width="13.200" height="4" viewBox="0 0 13.200 4" fill="none" stroke="#f14c4c" stroke-width="1"><path d="M0 3q1.650-3.600 3.300-1.500t3.300 0 3.300 0 3.300 0"/></svg>
<svg class="abs" style="left:269.8px;top:924px" width="13.200" height="4" viewBox="0 0 13.200 4" fill="none" stroke="#f14c4c" stroke-width="1"><path d="M0 3q1.650-3.600 3.300-1.500t3.300 0 3.300 0 3.300 0"/></svg>
<svg class="abs" style="left:230.2px;top:1052px" width="13.200" height="4" viewBox="0 0 13.200 4" fill="none" stroke="#f14c4c" stroke-width="1"><path d="M0 3q1.650-3.600 3.300-1.500t3.300 0 3.300 0 3.300 0"/></svg>
<svg class="abs" style="left:1551px;top:22px" width="109" height="212" shape-rendering="crispEdges">
<rect x="0" y="150" width="109" height="2" fill="#7a1a16"/>
<rect x="0" y="154" width="109" height="2" fill="#7a1a16"/>
<rect x="0" y="156" width="109" height="2" fill="#7a1a16"/>
<rect x="0" y="164" width="109" height="2" fill="#7a1a16"/>
<rect x="0" y="172" width="109" height="2" fill="#7a1a16"/>
<rect x="0" y="206" width="109" height="2" fill="#7a1a16"/>
<rect x="0" y="0" width="2" height="2" fill="#6a9955" opacity=".45"/>
<rect x="3" y="0" width="5" height="2" fill="#6a9955" opacity=".38"/>
<rect x="9" y="0" width="9" height="2" fill="#6a9955" opacity=".5"/>
<rect x="0" y="2" width="2" height="2" fill="#6a9955" opacity=".3"/>
<rect x="4" y="2" width="1" height="2" fill="#6a9955" opacity=".3"/>
<rect x="6" y="2" width="61" height="2" fill="#6a9955" opacity=".3"/>
<rect x="0" y="4" width="2" height="2" fill="#6a9955" opacity=".45"/>
<rect x="3" y="4" width="5" height="2" fill="#6a9955" opacity=".3"/>
<rect x="9" y="4" width="10" height="2" fill="#6a9955" opacity=".38"/>
<rect x="0" y="6" width="2" height="2" fill="#6a9955" opacity=".3"/>
<rect x="4" y="6" width="1" height="2" fill="#6a9955" opacity=".3"/>
<rect x="6" y="6" width="76" height="2" fill="#6a9955" opacity=".5"/>
<rect x="0" y="8" width="2" height="2" fill="#6a9955" opacity=".5"/>
<rect x="3" y="8" width="5" height="2" fill="#6a9955" opacity=".3"/>
<rect x="9" y="8" width="10" height="2" fill="#6a9955" opacity=".38"/>
<rect x="20" y="8" width="10" height="2" fill="#6a9955" opacity=".3"/>
<rect x="0" y="10" width="2" height="2" fill="#6a9955" opacity=".5"/>
<rect x="4" y="10" width="1" height="2" fill="#6a9955" opacity=".3"/>
<rect x="6" y="10" width="76" height="2" fill="#6a9955" opacity=".3"/>
<rect x="0" y="12" width="2" height="2" fill="#6a9955" opacity=".38"/>
<rect x="3" y="12" width="5" height="2" fill="#6a9955" opacity=".3"/>
<rect x="9" y="12" width="4" height="2" fill="#6a9955" opacity=".5"/>
<rect x="14" y="12" width="1" height="2" fill="#6a9955" opacity=".3"/>
<rect x="16" y="12" width="22" height="2" fill="#6a9955" opacity=".38"/>
<rect x="0" y="14" width="5" height="2" fill="#569cd6" opacity=".3"/>
<rect x="6" y="14" width="4" height="2" fill="#9cdcfe" opacity=".38"/>
<rect x="11" y="14" width="1" height="2" fill="#d4d4d4" opacity=".25"/>
<rect x="13" y="14" width="7" height="2" fill="#dcdcaa" opacity=".38"/>
<rect x="20" y="14" width="1" height="2" fill="#d4d4d4" opacity=".3"/>
<rect x="21" y="14" width="19" height="2" fill="#ce9178" opacity=".45"/>
<rect x="40" y="14" width="1" height="2" fill="#d4d4d4" opacity=".18"/>
<rect x="41" y="14" width="1" height="2" fill="#d4d4d4" opacity=".25"/>
<rect x="0" y="16" width="2" height="2" fill="#9cdcfe" opacity=".3"/>
<rect x="2" y="16" width="1" height="2" fill="#d4d4d4" opacity=".3"/>
<rect x="3" y="16" width="5" height="2" fill="#dcdcaa" opacity=".3"/>
<rect x="8" y="16" width="1" height="2" fill="#d4d4d4" opacity=".25"/>
<rect x="9" y="16" width="1" height="2" fill="#d4d4d4" opacity=".25"/>
<rect x="4" y="18" width="7" height="2" fill="#9cdcfe" opacity=".5"/>
<rect x="11" y="18" width="1" height="2" fill="#d4d4d4" opacity=".25"/>
<rect x="13" y="18" width="2" height="2" fill="#9cdcfe" opacity=".45"/>
<rect x="15" y="18" width="1" height="2" fill="#d4d4d4" opacity=".18"/>
<rect x="16" y="18" width="9" height="2" fill="#9cdcfe" opacity=".38"/>
<rect x="25" y="18" width="1" height="2" fill="#d4d4d4" opacity=".3"/>
<rect x="4" y="22" width="10" height="2" fill="#9cdcfe" opacity=".45"/>
<rect x="14" y="22" width="1" height="2" fill="#d4d4d4" opacity=".25"/>
<rect x="16" y="22" width="1" height="2" fill="#d4d4d4" opacity=".25"/>
<rect x="8" y="24" width="2" height="2" fill="#6a9955" opacity=".3"/>
<rect x="11" y="24" width="12" height="2" fill="#6a9955" opacity=".3"/>
<rect x="8" y="26" width="10" height="2" fill="#9cdcfe" opacity=".5"/>
<rect x="18" y="26" width="1" height="2" fill="#d4d4d4" opacity=".25"/>
<rect x="20" y="26" width="1" height="2" fill="#b5cea8" opacity=".38"/>
<rect x="21" y="26" width="1" height="2" fill="#d4d4d4" opacity=".25"/>
<rect x="8" y="28" width="2" height="2" fill="#6a9955" opacity=".3"/>
<rect x="11" y="28" width="16" height="2" fill="#6a9955" opacity=".3"/>
<rect x="8" y="30" width="12" height="2" fill="#9cdcfe" opacity=".45"/>
<rect x="20" y="30" width="1" height="2" fill="#d4d4d4" opacity=".3"/>
<rect x="22" y="30" width="1" height="2" fill="#b5cea8" opacity=".45"/>
<rect x="23" y="30" width="1" height="2" fill="#d4d4d4" opacity=".3"/>
<rect x="8" y="32" width="2" height="2" fill="#6a9955" opacity=".5"/>
<rect x="11" y="32" width="12" height="2" fill="#6a9955" opacity=".3"/>
<rect x="8" y="34" width="12" height="2" fill="#9cdcfe" opacity=".3"/>
<rect x="20" y="34" width="1" height="2" fill="#d4d4d4" opacity=".25"/>
<rect x="22" y="34" width="1" height="2" fill="#b5cea8" opacity=".3"/>
<rect x="23" y="34" width="1" height="2" fill="#d4d4d4" opacity=".3"/>
<rect x="8" y="36" width="2" height="2" fill="#6a9955" opacity=".45"/>
<rect x="11" y="36" width="6" height="2" fill="#6a9955" opacity=".5"/>
<rect x="8" y="38" width="5" height="2" fill="#9cdcfe" opacity=".45"/>
<rect x="13" y="38" width="1" height="2" fill="#d4d4d4" opacity=".3"/>
<rect x="15" y="38" width="1" height="2" fill="#b5cea8" opacity=".45"/>
<rect x="16" y="38" width="1" height="2" fill="#d4d4d4" opacity=".25"/>
<rect x="4" y="40" width="1" height="2" fill="#d4d4d4" opacity=".18"/>
<rect x="5" y="40" width="1" height="2" fill="#d4d4d4" opacity=".25"/>
<rect x="4" y="44" width="13" height="2" fill="#dcdcaa" opacity=".3"/>
<rect x="18" y="44" width="1" height="2" fill="#d4d4d4" opacity=".25"/>
<rect x="19" y="44" width="1" height="2" fill="#d4d4d4" opacity=".3"/>
<rect x="21" y="44" width="1" height="2" fill="#d4d4d4" opacity=".25"/>
<rect x="8" y="46" width="2" height="2" fill="#6a9955" opacity=".5"/>
<rect x="11" y="46" width="8" height="2" fill="#6a9955" opacity=".5"/>
<rect x="8" y="48" width="3" height="2" fill="#569cd6" opacity=".3"/>
<rect x="12" y="48" width="6" height="2" fill="#9cdcfe" opacity=".38"/>
<rect x="19" y="48" width="1" height="2" fill="#d4d4d4" opacity=".25"/>
<rect x="21" y="48" width="2" height="2" fill="#9cdcfe" opacity=".45"/>
<rect x="23" y="48" width="1" height="2" fill="#d4d4d4" opacity=".25"/>
<rect x="24" y="48" width="5" height="2" fill="#dcdcaa" opacity=".45"/>
<rect x="29" y="48" width="1" height="2" fill="#d4d4d4" opacity=".25"/>
<rect x="30" y="48" width="1" height="2" fill="#d4d4d4" opacity=".18"/>
<rect x="31" y="48" width="1" height="2" fill="#d4d4d4" opacity=".18"/>
<rect x="32" y="48" width="2" height="2" fill="#dcdcaa" opacity=".38"/>
<rect x="34" y="48" width="1" height="2" fill="#d4d4d4" opacity=".18"/>
<rect x="35" y="48" width="4" height="2" fill="#569cd6" opacity=".38"/>
<rect x="39" y="48" width="1" height="2" fill="#d4d4d4" opacity=".25"/>
<rect x="40" y="48" width="12" height="2" fill="#9cdcfe" opacity=".38"/>
<rect x="52" y="48" width="1" height="2" fill="#d4d4d4" opacity=".25"/>
<rect x="54" y="48" width="1" height="2" fill="#d4d4d4" opacity=".18"/>
<rect x="55" y="48" width="1" height="2" fill="#9cdcfe" opacity=".5"/>
<rect x="56" y="48" width="1" height="2" fill="#d4d4d4" opacity=".3"/>
<rect x="58" y="48" width="4" height="2" fill="#569cd6" opacity=".45"/>
<rect x="62" y="48" width="1" height="2" fill="#d4d4d4" opacity=".3"/>
<rect x="63" y="48" width="10" height="2" fill="#9cdcfe" opacity=".3"/>
<rect x="73" y="48" width="1" height="2" fill="#d4d4d4" opacity=".3"/>
<rect x="74" y="48" width="1" height="2" fill="#d4d4d4" opacity=".25"/>
<rect x="76" y="48" width="1" height="2" fill="#d4d4d4" opacity=".25"/>
<rect x="77" y="48" width="6" height="2" fill="#9cdcfe" opacity=".3"/>
<rect x="83" y="48" width="1" height="2" fill="#d4d4d4" opacity=".3"/>
<rect x="85" y="48" width="9" height="2" fill="#ce9178" opacity=".5"/>
<rect x="94" y="48" width="1" height="2" fill="#d4d4d4" opacity=".18"/>
<rect x="95" y="48" width="1" height="2" fill="#d4d4d4" opacity=".18"/>
<rect x="96" y="48" width="1" height="2" fill="#d4d4d4" opacity=".18"/>
<rect x="8" y="50" width="2" height="2" fill="#6a9955" opacity=".3"/>
<rect x="11" y="50" width="4" height="2" fill="#6a9955" opacity=".45"/>
<rect x="8" y="52" width="3" height="2" fill="#569cd6" opacity=".3"/>
<rect x="12" y="52" width="8" height="2" fill="#9cdcfe" opacity=".3"/>
<rect x="21" y="52" width="1" height="2" fill="#d4d4d4" opacity=".3"/>
<rect x="23" y="52" width="2" height="2" fill="#9cdcfe" opacity=".38"/>
<rect x="25" y="52" width="1" height="2" fill="#d4d4d4" opacity=".25"/>
<rect x="26" y="52" width="5" height="2" fill="#dcdcaa" opacity=".3"/>
<rect x="31" y="52" width="1" height="2" fill="#d4d4d4" opacity=".18"/>
<rect x="32" y="52" width="1" height="2" fill="#d4d4d4" opacity=".18"/>
<rect x="33" y="52" width="1" height="2" fill="#d4d4d4" opacity=".25"/>
<rect x="34" y="52" width="2" height="2" fill="#dcdcaa" opacity=".45"/>
<rect x="36" y="52" width="1" height="2" fill="#d4d4d4" opacity=".18"/>
<rect x="37" y="52" width="4" height="2" fill="#569cd6" opacity=".3"/>
<rect x="41" y="52" width="1" height="2" fill="#d4d4d4" opacity=".25"/>
<rect x="42" y="52" width="12" height="2" fill="#9cdcfe" opacity=".5"/>
<rect x="54" y="52" width="1" height="2" fill="#d4d4d4" opacity=".25"/>
<rect x="56" y="52" width="1" height="2" fill="#d4d4d4" opacity=".18"/>
<rect x="57" y="52" width="1" height="2" fill="#9cdcfe" opacity=".3"/>
<rect x="58" y="52" width="1" height="2" fill="#d4d4d4" opacity=".3"/>
<rect x="60" y="52" width="1" height="2" fill="#d4d4d4" opacity=".25"/>
<rect x="61" y="52" width="4" height="2" fill="#569cd6" opacity=".38"/>
<rect x="65" y="52" width="1" height="2" fill="#d4d4d4" opacity=".18"/>
<rect x="66" y="52" width="10" height="2" fill="#9cdcfe" opacity=".45"/>
<rect x="76" y="52" width="1" height="2" fill="#d4d4d4" opacity=".3"/>
<rect x="77" y="52" width="1" height="2" fill="#d4d4d4" opacity=".3"/>
<rect x="79" y="52" width="1" height="2" fill="#d4d4d4" opacity=".3"/>
<rect x="80" y="52" width="6" height="2" fill="#9cdcfe" opacity=".3"/>
<rect x="86" y="52" width="1" height="2" fill="#d4d4d4" opacity=".3"/>
<rect x="88" y="52" width="8" height="2" fill="#ce9178" opacity=".45"/>
<rect x="96" y="52" width="1" height="2" fill="#d4d4d4" opacity=".25"/>
<rect x="97" y="52" width="1" height="2" fill="#d4d4d4" opacity=".3"/>
<rect x="98" y="52" width="1" height="2" fill="#d4d4d4" opacity=".3"/>
<rect x="8" y="56" width="2" height="2" fill="#6a9955" opacity=".38"/>
<rect x="11" y="56" width="16" height="2" fill="#6a9955" opacity=".38"/>
<rect x="28" y="56" width="16" height="2" fill="#6a9955" opacity=".38"/>
<rect x="45" y="56" width="14" height="2" fill="#6a9955" opacity=".5"/>
<rect x="8" y="58" width="3" height="2" fill="#569cd6" opacity=".38"/>
<rect x="12" y="58" width="5" height="2" fill="#9cdcfe" opacity=".38"/>
<rect x="18" y="58" width="1" height="2" fill="#d4d4d4" opacity=".25"/>
<rect x="20" y="58" width="2" height="2" fill="#9cdcfe" opacity=".3"/>
<rect x="22" y="58" width="1" height="2" fill="#d4d4d4" opacity=".25"/>
<rect x="23" y="58" width="5" height="2" fill="#dcdcaa" opacity=".5"/>
<rect x="28" y="58" width="1" height="2" fill="#d4d4d4" opacity=".18"/>
<rect x="29" y="58" width="1" height="2" fill="#d4d4d4" opacity=".25"/>
<rect x="30" y="58" width="1" height="2" fill="#d4d4d4" opacity=".25"/>
<rect x="31" y="58" width="8" height="2" fill="#dcdcaa" opacity=".3"/>
<rect x="39" y="58" width="1" height="2" fill="#d4d4d4" opacity=".18"/>
<rect x="40" y="58" width="6" height="2" fill="#9cdcfe" opacity=".38"/>
<rect x="46" y="58" width="1" height="2" fill="#d4d4d4" opacity=".18"/>
<rect x="48" y="58" width="8" height="2" fill="#9cdcfe" opacity=".45"/>
<rect x="56" y="58" width="1" height="2" fill="#d4d4d4" opacity=".25"/>
<rect x="8" y="60" width="2" height="2" fill="#6a9955" opacity=".3"/>
<rect x="11" y="60" width="8" height="2" fill="#6a9955" opacity=".5"/>
<rect x="8" y="62" width="6" height="2" fill="#c586c0" opacity=".45"/>
<rect x="15" y="62" width="2" height="2" fill="#9cdcfe" opacity=".3"/>
<rect x="17" y="62" width="1" height="2" fill="#d4d4d4" opacity=".25"/>
<rect x="18" y="62" width="5" height="2" fill="#dcdcaa" opacity=".38"/>
<rect x="23" y="62" width="1" height="2" fill="#d4d4d4" opacity=".18"/>
<rect x="24" y="62" width="1" height="2" fill="#d4d4d4" opacity=".3"/>
<rect x="25" y="62" width="1" height="2" fill="#d4d4d4" opacity=".18"/>
<rect x="26" y="62" width="13" height="2" fill="#dcdcaa" opacity=".5"/>
<rect x="39" y="62" width="1" height="2" fill="#d4d4d4" opacity=".25"/>
<rect x="40" y="62" width="5" height="2" fill="#9cdcfe" opacity=".3"/>
<rect x="45" y="62" width="1" height="2" fill="#d4d4d4" opacity=".18"/>
<rect x="46" y="62" width="1" height="2" fill="#d4d4d4" opacity=".18"/>
<rect x="4" y="64" width="1" height="2" fill="#d4d4d4" opacity=".3"/>
<rect x="5" y="64" width="1" height="2" fill="#d4d4d4" opacity=".3"/>
<rect x="4" y="66" width="2" height="2" fill="#6a9955" opacity=".38"/>
<rect x="7" y="66" width="9" height="2" fill="#6a9955" opacity=".5"/>
<rect x="4" y="68" width="9" height="2" fill="#dcdcaa" opacity=".45"/>
<rect x="14" y="68" width="1" height="2" fill="#d4d4d4" opacity=".3"/>
<rect x="15" y="68" width="5" height="2" fill="#9cdcfe" opacity=".38"/>
<rect x="20" y="68" width="1" height="2" fill="#d4d4d4" opacity=".18"/>
<rect x="22" y="68" width="1" height="2" fill="#d4d4d4" opacity=".3"/>
<rect x="8" y="70" width="2" height="2" fill="#6a9955" opacity=".38"/>
<rect x="11" y="70" width="3" height="2" fill="#6a9955" opacity=".5"/>
<rect x="15" y="70" width="1" height="2" fill="#6a9955" opacity=".38"/>
<rect x="17" y="70" width="4" height="2" fill="#6a9955" opacity=".38"/>
<rect x="22" y="70" width="4" height="2" fill="#6a9955" opacity=".3"/>
<rect x="27" y="70" width="3" height="2" fill="#6a9955" opacity=".45"/>
<rect x="31" y="70" width="7" height="2" fill="#6a9955" opacity=".38"/>
<rect x="8" y="72" width="6" height="2" fill="#c586c0" opacity=".45"/>
<rect x="14" y="72" width="1" height="2" fill="#d4d4d4" opacity=".3"/>
<rect x="15" y="72" width="5" height="2" fill="#9cdcfe" opacity=".45"/>
<rect x="20" y="72" width="1" height="2" fill="#d4d4d4" opacity=".3"/>
<rect x="21" y="72" width="7" height="2" fill="#9cdcfe" opacity=".5"/>
<rect x="28" y="72" width="1" height="2" fill="#d4d4d4" opacity=".18"/>
<rect x="30" y="72" width="1" height="2" fill="#d4d4d4" opacity=".25"/>
<rect x="12" y="74" width="4" height="2" fill="#c586c0" opacity=".5"/>
<rect x="17" y="74" width="2" height="2" fill="#9cdcfe" opacity=".38"/>
<rect x="19" y="74" width="1" height="2" fill="#d4d4d4" opacity=".3"/>
<rect x="20" y="74" width="5" height="2" fill="#9cdcfe" opacity=".3"/>
<rect x="25" y="74" width="1" height="2" fill="#d4d4d4" opacity=".18"/>
<rect x="26" y="74" width="3" height="2" fill="#9cdcfe" opacity=".3"/>
<rect x="29" y="74" width="1" height="2" fill="#d4d4d4" opacity=".18"/>
<rect x="30" y="74" width="1" height="2" fill="#9cdcfe" opacity=".38"/>
<rect x="31" y="74" width="1" height="2" fill="#d4d4d4" opacity=".3"/>
<rect x="16" y="76" width="4" height="2" fill="#569cd6" opacity=".3"/>
<rect x="20" y="76" width="1" height="2" fill="#d4d4d4" opacity=".25"/>
<rect x="21" y="76" width="7" height="2" fill="#9cdcfe" opacity=".5"/>
<rect x="29" y="76" width="1" height="2" fill="#d4d4d4" opacity=".3"/>
<rect x="31" y="76" width="4" height="2" fill="#569cd6" opacity=".3"/>
<rect x="35" y="76" width="1" height="2" fill="#d4d4d4" opacity=".18"/>
<rect x="16" y="78" width="5" height="2" fill="#c586c0" opacity=".45"/>
<rect x="21" y="78" width="1" height="2" fill="#d4d4d4" opacity=".18"/>
<rect x="12" y="80" width="4" height="2" fill="#c586c0" opacity=".5"/>
<rect x="17" y="80" width="2" height="2" fill="#9cdcfe" opacity=".3"/>
<rect x="19" y="80" width="1" height="2" fill="#d4d4d4" opacity=".25"/>
<rect x="20" y="80" width="5" height="2" fill="#9cdcfe" opacity=".45"/>
<rect x="25" y="80" width="1" height="2" fill="#d4d4d4" opacity=".3"/>
<rect x="26" y="80" width="3" height="2" fill="#9cdcfe" opacity=".45"/>
<rect x="29" y="80" width="1" height="2" fill="#d4d4d4" opacity=".3"/>
<rect x="30" y="80" width="1" height="2" fill="#9cdcfe" opacity=".5"/>
<rect x="31" y="80" width="1" height="2" fill="#d4d4d4" opacity=".3"/>
<rect x="16" y="82" width="4" height="2" fill="#569cd6" opacity=".45"/>
<rect x="20" y="82" width="1" height="2" fill="#d4d4d4" opacity=".25"/>
<rect x="21" y="82" width="8" height="2" fill="#9cdcfe" opacity=".38"/>
<rect x="30" y="82" width="1" height="2" fill="#d4d4d4" opacity=".18"/>
<rect x="32" y="82" width="4" height="2" fill="#569cd6" opacity=".5"/>
<rect x="36" y="82" width="1" height="2" fill="#d4d4d4" opacity=".25"/>
<rect x="16" y="84" width="5" height="2" fill="#c586c0" opacity=".3"/>
<rect x="21" y="84" width="1" height="2" fill="#d4d4d4" opacity=".25"/>
<rect x="8" y="86" width="1" height="2" fill="#d4d4d4" opacity=".18"/>
<rect x="4" y="88" width="1" height="2" fill="#d4d4d4" opacity=".18"/>
<rect x="5" y="88" width="1" height="2" fill="#d4d4d4" opacity=".3"/>
<rect x="4" y="92" width="7" height="2" fill="#dcdcaa" opacity=".45"/>
<rect x="12" y="92" width="1" height="2" fill="#d4d4d4" opacity=".25"/>
<rect x="13" y="92" width="5" height="2" fill="#9cdcfe" opacity=".38"/>
<rect x="18" y="92" width="1" height="2" fill="#d4d4d4" opacity=".18"/>
<rect x="20" y="92" width="1" height="2" fill="#d4d4d4" opacity=".25"/>
<rect x="8" y="94" width="2" height="2" fill="#6a9955" opacity=".5"/>
<rect x="11" y="94" width="5" height="2" fill="#6a9955" opacity=".38"/>
<rect x="17" y="94" width="1" height="2" fill="#6a9955" opacity=".38"/>
<rect x="19" y="94" width="4" height="2" fill="#6a9955" opacity=".38"/>
<rect x="24" y="94" width="4" height="2" fill="#6a9955" opacity=".5"/>
<rect x="29" y="94" width="3" height="2" fill="#6a9955" opacity=".5"/>
<rect x="33" y="94" width="8" height="2" fill="#6a9955" opacity=".45"/>
<rect x="8" y="96" width="6" height="2" fill="#c586c0" opacity=".5"/>
<rect x="14" y="96" width="1" height="2" fill="#d4d4d4" opacity=".25"/>
<rect x="15" y="96" width="5" height="2" fill="#9cdcfe" opacity=".45"/>
<rect x="20" y="96" width="1" height="2" fill="#d4d4d4" opacity=".3"/>
<rect x="21" y="96" width="7" height="2" fill="#9cdcfe" opacity=".45"/>
<rect x="28" y="96" width="1" height="2" fill="#d4d4d4" opacity=".25"/>
<rect x="30" y="96" width="1" height="2" fill="#d4d4d4" opacity=".25"/>
<rect x="12" y="98" width="4" height="2" fill="#c586c0" opacity=".3"/>
<rect x="17" y="98" width="2" height="2" fill="#9cdcfe" opacity=".5"/>
<rect x="19" y="98" width="1" height="2" fill="#d4d4d4" opacity=".3"/>
<rect x="20" y="98" width="5" height="2" fill="#9cdcfe" opacity=".45"/>
<rect x="25" y="98" width="1" height="2" fill="#d4d4d4" opacity=".18"/>
<rect x="26" y="98" width="3" height="2" fill="#9cdcfe" opacity=".38"/>
<rect x="29" y="98" width="1" height="2" fill="#d4d4d4" opacity=".18"/>
<rect x="30" y="98" width="1" height="2" fill="#9cdcfe" opacity=".45"/>
<rect x="31" y="98" width="1" height="2" fill="#d4d4d4" opacity=".18"/>
<rect x="16" y="100" width="4" height="2" fill="#569cd6" opacity=".38"/>
<rect x="20" y="100" width="1" height="2" fill="#d4d4d4" opacity=".18"/>
<rect x="21" y="100" width="7" height="2" fill="#9cdcfe" opacity=".5"/>
<rect x="29" y="100" width="1" height="2" fill="#d4d4d4" opacity=".25"/>
<rect x="31" y="100" width="5" height="2" fill="#569cd6" opacity=".38"/>
<rect x="36" y="100" width="1" height="2" fill="#d4d4d4" opacity=".3"/>
<rect x="16" y="102" width="5" height="2" fill="#c586c0" opacity=".45"/>
<rect x="21" y="102" width="1" height="2" fill="#d4d4d4" opacity=".25"/>
<rect x="12" y="104" width="4" height="2" fill="#c586c0" opacity=".3"/>
<rect x="17" y="104" width="2" height="2" fill="#9cdcfe" opacity=".38"/>
<rect x="19" y="104" width="1" height="2" fill="#d4d4d4" opacity=".18"/>
<rect x="20" y="104" width="5" height="2" fill="#9cdcfe" opacity=".45"/>
<rect x="25" y="104" width="1" height="2" fill="#d4d4d4" opacity=".3"/>
<rect x="26" y="104" width="3" height="2" fill="#9cdcfe" opacity=".3"/>
<rect x="29" y="104" width="1" height="2" fill="#d4d4d4" opacity=".18"/>
<rect x="30" y="104" width="1" height="2" fill="#9cdcfe" opacity=".38"/>
<rect x="31" y="104" width="1" height="2" fill="#d4d4d4" opacity=".25"/>
<rect x="16" y="106" width="4" height="2" fill="#569cd6" opacity=".3"/>
<rect x="20" y="106" width="1" height="2" fill="#d4d4d4" opacity=".18"/>
<rect x="21" y="106" width="8" height="2" fill="#9cdcfe" opacity=".45"/>
<rect x="30" y="106" width="1" height="2" fill="#d4d4d4" opacity=".25"/>
<rect x="32" y="106" width="5" height="2" fill="#569cd6" opacity=".38"/>
<rect x="37" y="106" width="1" height="2" fill="#d4d4d4" opacity=".3"/>
<rect x="16" y="108" width="5" height="2" fill="#c586c0" opacity=".38"/>
<rect x="21" y="108" width="1" height="2" fill="#d4d4d4" opacity=".18"/>
<rect x="12" y="110" width="1" height="2" fill="#d4d4d4" opacity=".18"/>
<rect x="4" y="112" width="1" height="2" fill="#d4d4d4" opacity=".18"/>
<rect x="5" y="112" width="1" height="2" fill="#d4d4d4" opacity=".3"/>
<rect x="4" y="116" width="1" height="2" fill="#d4d4d4" opacity=".3"/>
<rect x="5" y="116" width="1" height="2" fill="#d4d4d4" opacity=".25"/>
<rect x="4" y="118" width="6" height="2" fill="#9cdcfe" opacity=".5"/>
<rect x="10" y="118" width="1" height="2" fill="#d4d4d4" opacity=".25"/>
<rect x="12" y="118" width="8" height="2" fill="#569cd6" opacity=".45"/>
<rect x="21" y="118" width="1" height="2" fill="#d4d4d4" opacity=".25"/>
<rect x="22" y="118" width="1" height="2" fill="#d4d4d4" opacity=".18"/>
<rect x="24" y="118" width="1" height="2" fill="#d4d4d4" opacity=".3"/>
<rect x="8" y="120" width="2" height="2" fill="#6a9955" opacity=".38"/>
<rect x="11" y="120" width="14" height="2" fill="#6a9955" opacity=".5"/>
<rect x="8" y="122" width="3" height="2" fill="#569cd6" opacity=".38"/>
<rect x="12" y="122" width="10" height="2" fill="#9cdcfe" opacity=".5"/>
<rect x="23" y="122" width="1" height="2" fill="#d4d4d4" opacity=".3"/>
<rect x="25" y="122" width="4" height="2" fill="#569cd6" opacity=".5"/>
<rect x="29" y="122" width="1" height="2" fill="#d4d4d4" opacity=".3"/>
<rect x="30" y="122" width="13" height="2" fill="#dcdcaa" opacity=".5"/>
<rect x="43" y="122" width="1" height="2" fill="#d4d4d4" opacity=".3"/>
<rect x="44" y="122" width="1" height="2" fill="#d4d4d4" opacity=".18"/>
<rect x="45" y="122" width="1" height="2" fill="#d4d4d4" opacity=".18"/>
<rect x="8" y="124" width="2" height="2" fill="#9cdcfe" opacity=".38"/>
<rect x="10" y="124" width="1" height="2" fill="#d4d4d4" opacity=".25"/>
<rect x="11" y="124" width="5" height="2" fill="#dcdcaa" opacity=".3"/>
<rect x="16" y="124" width="1" height="2" fill="#d4d4d4" opacity=".18"/>
<rect x="17" y="124" width="4" height="2" fill="#569cd6" opacity=".3"/>
<rect x="21" y="124" width="1" height="2" fill="#d4d4d4" opacity=".25"/>
<rect x="22" y="124" width="4" height="2" fill="#9cdcfe" opacity=".38"/>
<rect x="26" y="124" width="1" height="2" fill="#d4d4d4" opacity=".18"/>
<rect x="27" y="124" width="1" height="2" fill="#d4d4d4" opacity=".3"/>
<rect x="28" y="124" width="4" height="2" fill="#dcdcaa" opacity=".45"/>
<rect x="32" y="124" width="1" height="2" fill="#d4d4d4" opacity=".3"/>
<rect x="33" y="124" width="10" height="2" fill="#9cdcfe" opacity=".45"/>
<rect x="43" y="124" width="1" height="2" fill="#d4d4d4" opacity=".25"/>
<rect x="44" y="124" width="1" height="2" fill="#d4d4d4" opacity=".18"/>
<rect x="45" y="124" width="5" height="2" fill="#dcdcaa" opacity=".45"/>
<rect x="50" y="124" width="1" height="2" fill="#d4d4d4" opacity=".18"/>
<rect x="51" y="124" width="1" height="2" fill="#d4d4d4" opacity=".25"/>
<rect x="8" y="128" width="2" height="2" fill="#6a9955" opacity=".45"/>
<rect x="11" y="128" width="14" height="2" fill="#6a9955" opacity=".45"/>
<rect x="8" y="130" width="4" height="2" fill="#569cd6" opacity=".38"/>
<rect x="12" y="130" width="1" height="2" fill="#d4d4d4" opacity=".25"/>
<rect x="13" y="130" width="7" height="2" fill="#9cdcfe" opacity=".38"/>
<rect x="21" y="130" width="1" height="2" fill="#d4d4d4" opacity=".18"/>
<rect x="23" y="130" width="5" height="2" fill="#569cd6" opacity=".3"/>
<rect x="28" y="130" width="1" height="2" fill="#d4d4d4" opacity=".25"/>
<rect x="8" y="132" width="4" height="2" fill="#569cd6" opacity=".3"/>
<rect x="12" y="132" width="1" height="2" fill="#d4d4d4" opacity=".25"/>
<rect x="13" y="132" width="8" height="2" fill="#9cdcfe" opacity=".38"/>
<rect x="22" y="132" width="1" height="2" fill="#d4d4d4" opacity=".3"/>
<rect x="24" y="132" width="5" height="2" fill="#569cd6" opacity=".3"/>
<rect x="29" y="132" width="1" height="2" fill="#d4d4d4" opacity=".25"/>
<rect x="8" y="134" width="2" height="2" fill="#6a9955" opacity=".3"/>
<rect x="11" y="134" width="20" height="2" fill="#6a9955" opacity=".38"/>
<rect x="8" y="136" width="4" height="2" fill="#569cd6" opacity=".5"/>
<rect x="12" y="136" width="1" height="2" fill="#d4d4d4" opacity=".25"/>
<rect x="13" y="136" width="6" height="2" fill="#9cdcfe" opacity=".3"/>
<rect x="20" y="136" width="1" height="2" fill="#d4d4d4" opacity=".25"/>
<rect x="22" y="136" width="1" height="2" fill="#b5cea8" opacity=".38"/>
<rect x="23" y="136" width="1" height="2" fill="#d4d4d4" opacity=".3"/>
<rect x="8" y="140" width="2" height="2" fill="#6a9955" opacity=".38"/>
<rect x="11" y="140" width="18" height="2" fill="#6a9955" opacity=".5"/>
<rect x="8" y="142" width="2" height="2" fill="#9cdcfe" opacity=".45"/>
<rect x="10" y="142" width="1" height="2" fill="#d4d4d4" opacity=".18"/>
<rect x="11" y="142" width="11" height="2" fill="#9cdcfe" opacity=".45"/>
<rect x="22" y="142" width="1" height="2" fill="#d4d4d4" opacity=".18"/>
<rect x="23" y="142" width="2" height="2" fill="#dcdcaa" opacity=".5"/>
<rect x="25" y="142" width="1" height="2" fill="#d4d4d4" opacity=".3"/>
<rect x="26" y="142" width="2" height="2" fill="#9cdcfe" opacity=".3"/>
<rect x="28" y="142" width="1" height="2" fill="#d4d4d4" opacity=".18"/>
<rect x="29" y="142" width="11" height="2" fill="#9cdcfe" opacity=".3"/>
<rect x="40" y="142" width="1" height="2" fill="#d4d4d4" opacity=".18"/>
<rect x="41" y="142" width="9" height="2" fill="#9cdcfe" opacity=".45"/>
<rect x="50" y="142" width="1" height="2" fill="#d4d4d4" opacity=".25"/>
<rect x="51" y="142" width="8" height="2" fill="#9cdcfe" opacity=".5"/>
<rect x="59" y="142" width="1" height="2" fill="#d4d4d4" opacity=".3"/>
<rect x="61" y="142" width="4" height="2" fill="#569cd6" opacity=".3"/>
<rect x="65" y="142" width="1" height="2" fill="#d4d4d4" opacity=".25"/>
<rect x="66" y="142" width="9" height="2" fill="#9cdcfe" opacity=".45"/>
<rect x="75" y="142" width="1" height="2" fill="#d4d4d4" opacity=".25"/>
<rect x="77" y="142" width="4" height="2" fill="#569cd6" opacity=".3"/>
<rect x="81" y="142" width="1" height="2" fill="#d4d4d4" opacity=".3"/>
<rect x="82" y="142" width="1" height="2" fill="#d4d4d4" opacity=".3"/>
<rect x="8" y="144" width="2" height="2" fill="#9cdcfe" opacity=".5"/>
<rect x="10" y="144" width="1" height="2" fill="#d4d4d4" opacity=".18"/>
<rect x="11" y="144" width="11" height="2" fill="#9cdcfe" opacity=".45"/>
<rect x="22" y="144" width="1" height="2" fill="#d4d4d4" opacity=".3"/>
<rect x="23" y="144" width="2" height="2" fill="#dcdcaa" opacity=".38"/>
<rect x="25" y="144" width="1" height="2" fill="#d4d4d4" opacity=".3"/>
<rect x="26" y="144" width="2" height="2" fill="#9cdcfe" opacity=".5"/>
<rect x="28" y="144" width="1" height="2" fill="#d4d4d4" opacity=".25"/>
<rect x="29" y="144" width="11" height="2" fill="#9cdcfe" opacity=".3"/>
<rect x="40" y="144" width="1" height="2" fill="#d4d4d4" opacity=".3"/>
<rect x="41" y="144" width="9" height="2" fill="#9cdcfe" opacity=".45"/>
<rect x="50" y="144" width="1" height="2" fill="#d4d4d4" opacity=".3"/>
<rect x="51" y="144" width="6" height="2" fill="#9cdcfe" opacity=".38"/>
<rect x="57" y="144" width="1" height="2" fill="#d4d4d4" opacity=".3"/>
<rect x="59" y="144" width="4" height="2" fill="#569cd6" opacity=".38"/>
<rect x="63" y="144" width="1" height="2" fill="#d4d4d4" opacity=".25"/>
<rect x="64" y="144" width="7" height="2" fill="#9cdcfe" opacity=".45"/>
<rect x="71" y="144" width="1" height="2" fill="#d4d4d4" opacity=".18"/>
<rect x="73" y="144" width="4" height="2" fill="#569cd6" opacity=".5"/>
<rect x="77" y="144" width="1" height="2" fill="#d4d4d4" opacity=".25"/>
<rect x="78" y="144" width="1" height="2" fill="#d4d4d4" opacity=".3"/>
<rect x="4" y="146" width="1" height="2" fill="#d4d4d4" opacity=".3"/>
<rect x="5" y="146" width="1" height="2" fill="#d4d4d4" opacity=".3"/>
<rect x="4" y="150" width="9" height="2" fill="#dcdcaa" opacity=".5"/>
<rect x="14" y="150" width="1" height="2" fill="#d4d4d4" opacity=".3"/>
<rect x="15" y="150" width="1" height="2" fill="#d4d4d4" opacity=".25"/>
<rect x="17" y="150" width="1" height="2" fill="#d4d4d4" opacity=".25"/>
<rect x="8" y="152" width="2" height="2" fill="#6a9955" opacity=".3"/>
<rect x="11" y="152" width="16" height="2" fill="#6a9955" opacity=".38"/>
<rect x="8" y="154" width="2" height="2" fill="#9cdcfe" opacity=".45"/>
<rect x="10" y="154" width="1" height="2" fill="#d4d4d4" opacity=".25"/>
<rect x="11" y="154" width="11" height="2" fill="#9cdcfe" opacity=".3"/>
<rect x="22" y="154" width="1" height="2" fill="#d4d4d4" opacity=".25"/>
<rect x="23" y="154" width="3" height="2" fill="#dcdcaa" opacity=".3"/>
<rect x="26" y="154" width="1" height="2" fill="#d4d4d4" opacity=".25"/>
<rect x="27" y="154" width="2" height="2" fill="#9cdcfe" opacity=".5"/>
<rect x="29" y="154" width="1" height="2" fill="#d4d4d4" opacity=".18"/>
<rect x="30" y="154" width="11" height="2" fill="#9cdcfe" opacity=".3"/>
<rect x="41" y="154" width="1" height="2" fill="#d4d4d4" opacity=".18"/>
<rect x="42" y="154" width="9" height="2" fill="#9cdcfe" opacity=".45"/>
<rect x="51" y="154" width="1" height="2" fill="#d4d4d4" opacity=".18"/>
<rect x="52" y="154" width="8" height="2" fill="#9cdcfe" opacity=".45"/>
<rect x="60" y="154" width="1" height="2" fill="#d4d4d4" opacity=".3"/>
<rect x="62" y="154" width="4" height="2" fill="#569cd6" opacity=".45"/>
<rect x="66" y="154" width="1" height="2" fill="#d4d4d4" opacity=".25"/>
<rect x="67" y="154" width="9" height="2" fill="#9cdcfe" opacity=".5"/>
<rect x="76" y="154" width="1" height="2" fill="#d4d4d4" opacity=".18"/>
<rect x="78" y="154" width="4" height="2" fill="#569cd6" opacity=".38"/>
<rect x="82" y="154" width="1" height="2" fill="#d4d4d4" opacity=".25"/>
<rect x="83" y="154" width="1" height="2" fill="#d4d4d4" opacity=".25"/>
<rect x="8" y="156" width="2" height="2" fill="#9cdcfe" opacity=".45"/>
<rect x="10" y="156" width="1" height="2" fill="#d4d4d4" opacity=".25"/>
<rect x="11" y="156" width="11" height="2" fill="#9cdcfe" opacity=".45"/>
<rect x="22" y="156" width="1" height="2" fill="#d4d4d4" opacity=".25"/>
<rect x="23" y="156" width="3" height="2" fill="#dcdcaa" opacity=".3"/>
<rect x="26" y="156" width="1" height="2" fill="#d4d4d4" opacity=".18"/>
<rect x="27" y="156" width="2" height="2" fill="#9cdcfe" opacity=".45"/>
<rect x="29" y="156" width="1" height="2" fill="#d4d4d4" opacity=".25"/>
<rect x="30" y="156" width="11" height="2" fill="#9cdcfe" opacity=".3"/>
<rect x="41" y="156" width="1" height="2" fill="#d4d4d4" opacity=".3"/>
<rect x="42" y="156" width="9" height="2" fill="#9cdcfe" opacity=".3"/>
<rect x="51" y="156" width="1" height="2" fill="#d4d4d4" opacity=".25"/>
<rect x="52" y="156" width="6" height="2" fill="#9cdcfe" opacity=".45"/>
<rect x="58" y="156" width="1" height="2" fill="#d4d4d4" opacity=".25"/>
<rect x="60" y="156" width="4" height="2" fill="#569cd6" opacity=".5"/>
<rect x="64" y="156" width="1" height="2" fill="#d4d4d4" opacity=".25"/>
<rect x="65" y="156" width="7" height="2" fill="#9cdcfe" opacity=".5"/>
<rect x="72" y="156" width="1" height="2" fill="#d4d4d4" opacity=".18"/>
<rect x="74" y="156" width="4" height="2" fill="#569cd6" opacity=".45"/>
<rect x="78" y="156" width="1" height="2" fill="#d4d4d4" opacity=".18"/>
<rect x="79" y="156" width="1" height="2" fill="#d4d4d4" opacity=".3"/>
<rect x="4" y="158" width="1" height="2" fill="#d4d4d4" opacity=".18"/>
<rect x="5" y="158" width="1" height="2" fill="#d4d4d4" opacity=".25"/>
<rect x="4" y="164" width="5" height="2" fill="#dcdcaa" opacity=".45"/>
<rect x="10" y="164" width="1" height="2" fill="#d4d4d4" opacity=".25"/>
<rect x="11" y="164" width="1" height="2" fill="#d4d4d4" opacity=".18"/>
<rect x="13" y="164" width="1" height="2" fill="#d4d4d4" opacity=".3"/>
<rect x="4" y="168" width="1" height="2" fill="#d4d4d4" opacity=".3"/>
<rect x="5" y="168" width="1" height="2" fill="#d4d4d4" opacity=".18"/>
<rect x="4" y="172" width="6" height="2" fill="#9cdcfe" opacity=".5"/>
<rect x="10" y="172" width="1" height="2" fill="#d4d4d4" opacity=".3"/>
<rect x="12" y="172" width="8" height="2" fill="#569cd6" opacity=".38"/>
<rect x="21" y="172" width="1" height="2" fill="#d4d4d4" opacity=".25"/>
<rect x="22" y="172" width="2" height="2" fill="#9cdcfe" opacity=".3"/>
<rect x="24" y="172" width="1" height="2" fill="#d4d4d4" opacity=".18"/>
<rect x="26" y="172" width="1" height="2" fill="#d4d4d4" opacity=".25"/>
<rect x="8" y="174" width="2" height="2" fill="#6a9955" opacity=".45"/>
<rect x="11" y="174" width="30" height="2" fill="#6a9955" opacity=".45"/>
<rect x="8" y="176" width="2" height="2" fill="#c586c0" opacity=".45"/>
<rect x="11" y="176" width="1" height="2" fill="#d4d4d4" opacity=".3"/>
<rect x="12" y="176" width="4" height="2" fill="#569cd6" opacity=".45"/>
<rect x="16" y="176" width="1" height="2" fill="#d4d4d4" opacity=".3"/>
<rect x="17" y="176" width="7" height="2" fill="#9cdcfe" opacity=".38"/>
<rect x="24" y="176" width="1" height="2" fill="#d4d4d4" opacity=".25"/>
<rect x="26" y="176" width="1" height="2" fill="#d4d4d4" opacity=".18"/>
<rect x="12" y="178" width="4" height="2" fill="#569cd6" opacity=".38"/>
<rect x="16" y="178" width="1" height="2" fill="#d4d4d4" opacity=".18"/>
<rect x="17" y="178" width="6" height="2" fill="#9cdcfe" opacity=".38"/>
<rect x="24" y="178" width="1" height="2" fill="#d4d4d4" opacity=".3"/>
<rect x="25" y="178" width="1" height="2" fill="#d4d4d4" opacity=".25"/>
<rect x="27" y="178" width="4" height="2" fill="#569cd6" opacity=".45"/>
<rect x="31" y="178" width="1" height="2" fill="#d4d4d4" opacity=".25"/>
<rect x="32" y="178" width="5" height="2" fill="#9cdcfe" opacity=".38"/>
<rect x="38" y="178" width="1" height="2" fill="#d4d4d4" opacity=".18"/>
<rect x="40" y="178" width="2" height="2" fill="#9cdcfe" opacity=".3"/>
<rect x="42" y="178" width="1" height="2" fill="#d4d4d4" opacity=".25"/>
<rect x="8" y="180" width="1" height="2" fill="#d4d4d4" opacity=".25"/>
<rect x="8" y="182" width="4" height="2" fill="#c586c0" opacity=".38"/>
<rect x="13" y="182" width="2" height="2" fill="#c586c0" opacity=".45"/>
<rect x="16" y="182" width="1" height="2" fill="#d4d4d4" opacity=".3"/>
<rect x="17" y="182" width="4" height="2" fill="#569cd6" opacity=".38"/>
<rect x="21" y="182" width="1" height="2" fill="#d4d4d4" opacity=".3"/>
<rect x="22" y="182" width="8" height="2" fill="#9cdcfe" opacity=".5"/>
<rect x="30" y="182" width="1" height="2" fill="#d4d4d4" opacity=".25"/>
<rect x="32" y="182" width="1" height="2" fill="#d4d4d4" opacity=".25"/>
<rect x="12" y="184" width="4" height="2" fill="#569cd6" opacity=".45"/>
<rect x="16" y="184" width="1" height="2" fill="#d4d4d4" opacity=".18"/>
<rect x="17" y="184" width="6" height="2" fill="#9cdcfe" opacity=".5"/>
<rect x="24" y="184" width="1" height="2" fill="#d4d4d4" opacity=".3"/>
<rect x="25" y="184" width="1" height="2" fill="#d4d4d4" opacity=".18"/>
<rect x="27" y="184" width="4" height="2" fill="#569cd6" opacity=".38"/>
<rect x="31" y="184" width="1" height="2" fill="#d4d4d4" opacity=".25"/>
<rect x="32" y="184" width="5" height="2" fill="#9cdcfe" opacity=".38"/>
<rect x="38" y="184" width="1" height="2" fill="#d4d4d4" opacity=".25"/>
<rect x="40" y="184" width="2" height="2" fill="#9cdcfe" opacity=".5"/>
<rect x="42" y="184" width="1" height="2" fill="#d4d4d4" opacity=".25"/>
<rect x="8" y="186" width="1" height="2" fill="#d4d4d4" opacity=".18"/>
<rect x="8" y="190" width="2" height="2" fill="#6a9955" opacity=".3"/>
<rect x="11" y="190" width="28" height="2" fill="#6a9955" opacity=".5"/>
<rect x="8" y="192" width="2" height="2" fill="#c586c0" opacity=".5"/>
<rect x="11" y="192" width="1" height="2" fill="#d4d4d4" opacity=".18"/>
<rect x="12" y="192" width="4" height="2" fill="#9cdcfe" opacity=".3"/>
<rect x="16" y="192" width="1" height="2" fill="#d4d4d4" opacity=".3"/>
<rect x="17" y="192" width="3" height="2" fill="#dcdcaa" opacity=".5"/>
<rect x="20" y="192" width="1" height="2" fill="#d4d4d4" opacity=".18"/>
<rect x="21" y="192" width="4" height="2" fill="#569cd6" opacity=".3"/>
<rect x="25" y="192" width="1" height="2" fill="#d4d4d4" opacity=".18"/>
<rect x="26" y="192" width="6" height="2" fill="#9cdcfe" opacity=".38"/>
<rect x="32" y="192" width="1" height="2" fill="#d4d4d4" opacity=".3"/>
<rect x="34" y="192" width="1" height="2" fill="#d4d4d4" opacity=".18"/>
<rect x="36" y="192" width="4" height="2" fill="#569cd6" opacity=".3"/>
<rect x="40" y="192" width="1" height="2" fill="#d4d4d4" opacity=".18"/>
<rect x="41" y="192" width="12" height="2" fill="#9cdcfe" opacity=".38"/>
<rect x="53" y="192" width="1" height="2" fill="#d4d4d4" opacity=".3"/>
<rect x="55" y="192" width="1" height="2" fill="#d4d4d4" opacity=".18"/>
<rect x="12" y="194" width="2" height="2" fill="#6a9955" opacity=".45"/>
<rect x="15" y="194" width="2" height="2" fill="#6a9955" opacity=".5"/>
<rect x="18" y="194" width="5" height="2" fill="#6a9955" opacity=".3"/>
<rect x="24" y="194" width="5" height="2" fill="#6a9955" opacity=".3"/>
<rect x="30" y="194" width="6" height="2" fill="#6a9955" opacity=".3"/>
<rect x="37" y="194" width="3" height="2" fill="#6a9955" opacity=".45"/>
<rect x="41" y="194" width="3" height="2" fill="#6a9955" opacity=".38"/>
<rect x="45" y="194" width="5" height="2" fill="#6a9955" opacity=".5"/>
<rect x="51" y="194" width="4" height="2" fill="#6a9955" opacity=".45"/>
<rect x="56" y="194" width="7" height="2" fill="#6a9955" opacity=".38"/>
<rect x="64" y="194" width="9" height="2" fill="#6a9955" opacity=".3"/>
<rect x="12" y="196" width="4" height="2" fill="#569cd6" opacity=".3"/>
<rect x="16" y="196" width="1" height="2" fill="#d4d4d4" opacity=".25"/>
<rect x="17" y="196" width="6" height="2" fill="#9cdcfe" opacity=".45"/>
<rect x="24" y="196" width="1" height="2" fill="#d4d4d4" opacity=".3"/>
<rect x="26" y="196" width="4" height="2" fill="#569cd6" opacity=".38"/>
<rect x="30" y="196" width="1" height="2" fill="#d4d4d4" opacity=".3"/>
<rect x="31" y="196" width="12" height="2" fill="#9cdcfe" opacity=".38"/>
<rect x="44" y="196" width="1" height="2" fill="#d4d4d4" opacity=".18"/>
<rect x="46" y="196" width="4" height="2" fill="#569cd6" opacity=".5"/>
<rect x="50" y="196" width="1" height="2" fill="#d4d4d4" opacity=".18"/>
<rect x="51" y="196" width="6" height="2" fill="#9cdcfe" opacity=".3"/>
<rect x="58" y="196" width="1" height="2" fill="#d4d4d4" opacity=".25"/>
<rect x="60" y="196" width="4" height="2" fill="#9cdcfe" opacity=".5"/>
<rect x="64" y="196" width="1" height="2" fill="#d4d4d4" opacity=".25"/>
<rect x="65" y="196" width="3" height="2" fill="#dcdcaa" opacity=".38"/>
<rect x="68" y="196" width="1" height="2" fill="#d4d4d4" opacity=".25"/>
<rect x="69" y="196" width="4" height="2" fill="#569cd6" opacity=".38"/>
<rect x="73" y="196" width="1" height="2" fill="#d4d4d4" opacity=".18"/>
<rect x="74" y="196" width="6" height="2" fill="#9cdcfe" opacity=".45"/>
<rect x="80" y="196" width="1" height="2" fill="#d4d4d4" opacity=".25"/>
<rect x="81" y="196" width="1" height="2" fill="#d4d4d4" opacity=".18"/>
<rect x="8" y="198" width="1" height="2" fill="#d4d4d4" opacity=".25"/>
<rect x="8" y="200" width="4" height="2" fill="#569cd6" opacity=".3"/>
<rect x="12" y="200" width="1" height="2" fill="#d4d4d4" opacity=".25"/>
<rect x="13" y="200" width="4" height="2" fill="#9cdcfe" opacity=".38"/>
<rect x="17" y="200" width="1" height="2" fill="#d4d4d4" opacity=".18"/>
<rect x="18" y="200" width="1" height="2" fill="#9cdcfe" opacity=".38"/>
<rect x="20" y="200" width="1" height="2" fill="#d4d4d4" opacity=".18"/>
<rect x="21" y="200" width="1" height="2" fill="#d4d4d4" opacity=".25"/>
<rect x="23" y="200" width="4" height="2" fill="#569cd6" opacity=".3"/>
<rect x="27" y="200" width="1" height="2" fill="#d4d4d4" opacity=".3"/>
<rect x="28" y="200" width="6" height="2" fill="#9cdcfe" opacity=".38"/>
<rect x="35" y="200" width="1" height="2" fill="#d4d4d4" opacity=".25"/>
<rect x="37" y="200" width="2" height="2" fill="#9cdcfe" opacity=".5"/>
<rect x="39" y="200" width="1" height="2" fill="#d4d4d4" opacity=".3"/>
<rect x="4" y="204" width="1" height="2" fill="#d4d4d4" opacity=".25"/>
<rect x="5" y="204" width="1" height="2" fill="#d4d4d4" opacity=".18"/>
<rect x="0" y="206" width="1" height="2" fill="#d4d4d4" opacity=".3"/>
<rect x="1" y="206" width="1" height="2" fill="#d4d4d4" opacity=".25"/>
<rect x="2" y="206" width="1" height="2" fill="#d4d4d4" opacity=".3"/>
<rect x="10" y="118" width="1" height="2" fill="#ff1212"/>
<rect x="17" y="150" width="1" height="2" fill="#ff1212"/>
<rect x="10" y="154" width="1" height="2" fill="#ff1212"/>
<rect x="83" y="154" width="1" height="2" fill="#ff1212"/>
<rect x="10" y="156" width="1" height="2" fill="#ff1212"/>
<rect x="79" y="156" width="1" height="2" fill="#ff1212"/>
<rect x="13" y="164" width="1" height="2" fill="#ff1212"/>
<rect x="10" y="172" width="1" height="2" fill="#ff1212"/>
<rect x="0" y="206" width="1" height="2" fill="#ff1212"/>
</svg>
<div class="abs" style="left:1660px;top:22px;width:1px;height:1100px;background:#3a3a3a"></div>
<div class="abs" style="left:1660px;top:22px;width:14px;height:1px;background:#3a3a3a"></div>
<div class="abs" style="left:1660px;top:457px;width:14px;height:273px;background:#444"></div>
<div class="abs" style="left:1661px;top:491px;width:13px;height:2px;background:#9a9a9a"></div>
<div class="abs" style="left:1670px;top:492px;width:3px;height:7px;background:#a83a3a"></div>
<div class="abs" style="left:1670px;top:618px;width:3px;height:8px;background:#a83a3a"></div>
<div class="abs" style="left:1670px;top:634px;width:3px;height:16px;background:#a83a3a"></div>
<div class="abs" style="left:1670px;top:674px;width:3px;height:8px;background:#a83a3a"></div>
<div class="abs" style="left:1670px;top:706px;width:3px;height:8px;background:#a83a3a"></div>
<div class="abs" style="left:1670px;top:841px;width:3px;height:8px;background:#c01c1c"></div>
</div>
<div class="tabs">
  <div class="tab" style="left:0;width:119px;background:#1e1e1e"><span class="fi" style="left:14px;top:0">JS</span><span class="abs red" style="left:32px">Player.js</span><span class="abs" style="left:84px;color:#c4715f">9</span>
    <svg class="abs" style="left:97px;top:10px" width="16" height="16" viewBox="0 0 16 16" stroke="#fff" stroke-width="1.3"><path d="M3.500 3.500l9 9M12.500 3.500l-9 9"/></svg></div>
  <div class="tab" style="left:119px;width:120px;background:#2d2d2d"><span class="fi" style="left:15px;top:0">JS</span><span class="abs" style="left:33px;color:#969696">Game.js</span></div>
  <svg class="abs" style="left:1617px;top:9px" width="16" height="16" viewBox="0 0 16 16" fill="none" stroke="#c5c5c5" stroke-width="1"><rect x="1.500" y="2.500" width="13" height="12" rx="1"/><path d="M1.500 8.500h13"/></svg>
  <svg class="abs" style="left:1643px;top:9px" width="16" height="16" viewBox="0 0 16 16" fill="#c5c5c5"><circle cx="3" cy="8.500" r="1.100"/><circle cx="8" cy="8.500" r="1.100"/><circle cx="13" cy="8.500" r="1.100"/></svg>
</div>
<div class="bc"><span class="abs" style="left:16px">assets</span><svg class="abs" style="left:50px;top:4px" width="16" height="16" viewBox="0 0 16 16" fill="none" stroke="#a9a9a9" stroke-width="1.1"><path d="M5.800 3 10.800 8 5.800 13"/></svg><span class="abs" style="left:66.500px;letter-spacing:-1.200px">JS</span><svg class="abs" style="left:78px;top:4px" width="16" height="16" viewBox="0 0 16 16" fill="none" stroke="#a9a9a9" stroke-width="1.1"><path d="M5.800 3 10.800 8 5.800 13"/></svg><span class="fi" style="left:98px;top:0">JS</span><span class="abs" style="left:116px">Player.js</span><svg class="abs" style="left:162px;top:4px" width="16" height="16" viewBox="0 0 16 16" fill="none" stroke="#a9a9a9" stroke-width="1.1"><path d="M5.800 3 10.800 8 5.800 13"/></svg><span class="abs" style="left:178px">…</span></div>

</div>
</body>
</html>
